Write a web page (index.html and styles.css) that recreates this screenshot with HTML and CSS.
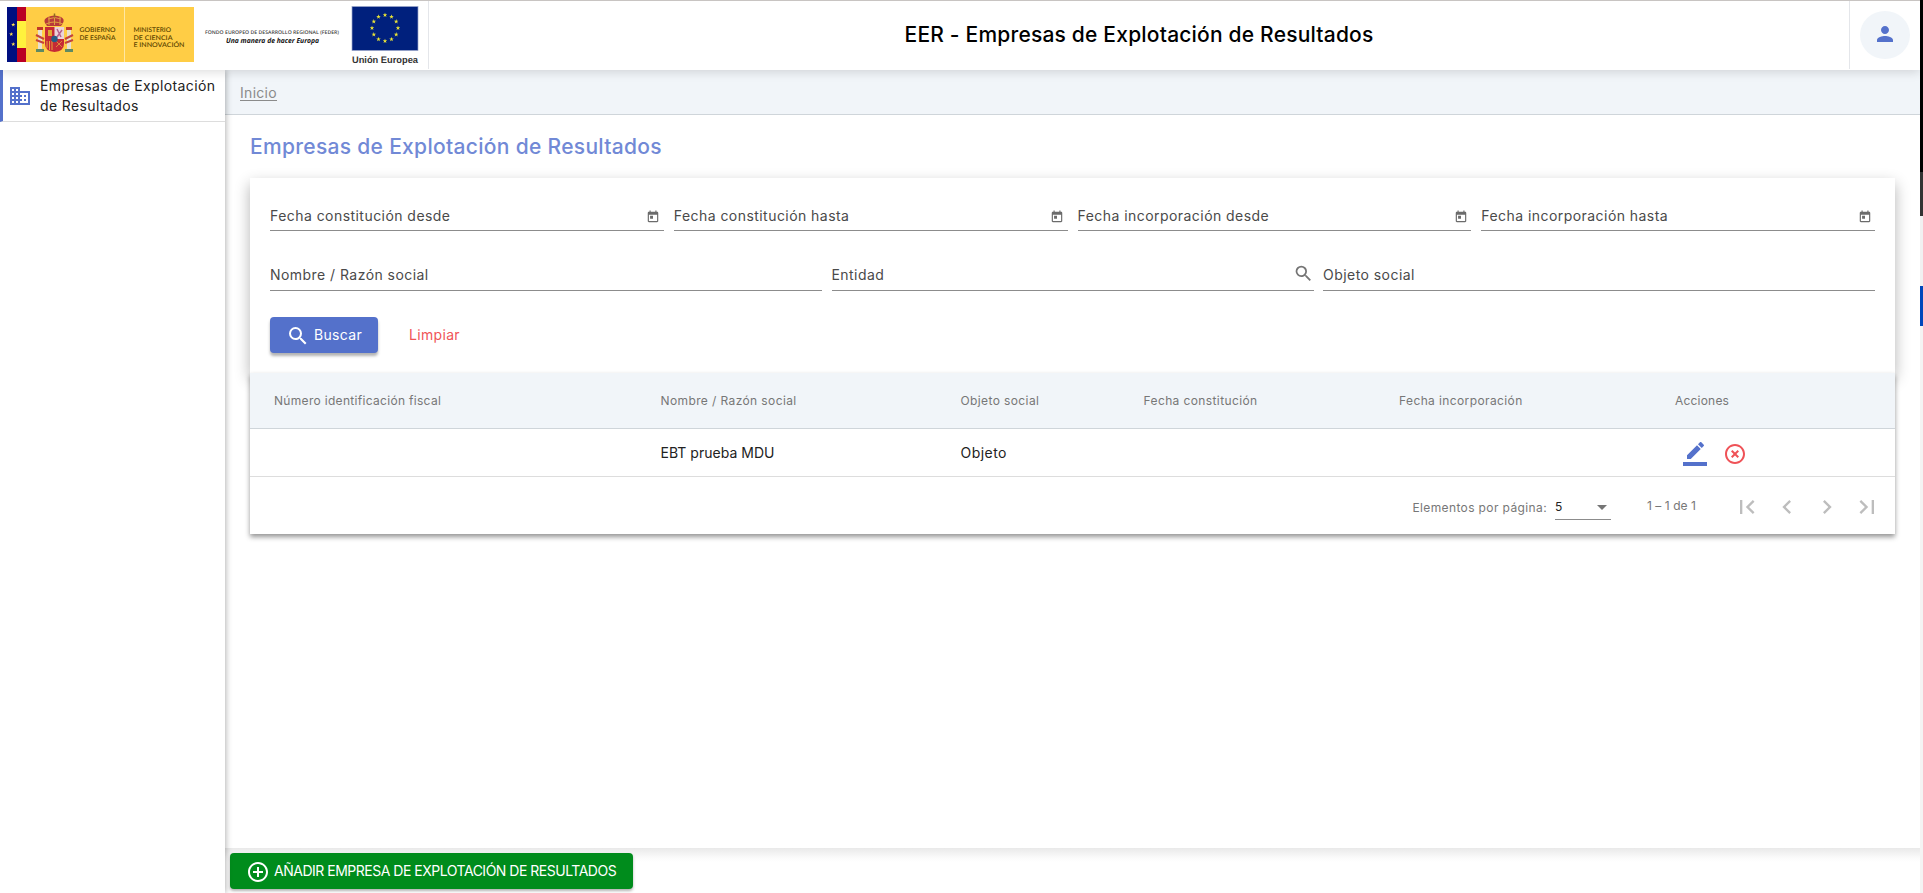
FILE: index.html
```
<!DOCTYPE html>
<html lang="es">
<head>
<meta charset="utf-8">
<title>EER - Empresas de Explotación de Resultados</title>
<link rel="stylesheet" href="styles.css">
</head>
<body>
<svg class="defs" width="0" height="0" aria-hidden="true">
  <symbol id="search" viewBox="0 0 24 24"><path d="M15.5 14h-.79l-.28-.27A6.47 6.47 0 0 0 16 9.5 6.5 6.5 0 1 0 9.5 16c1.61 0 3.09-.59 4.23-1.57l.27.28v.79l5 4.99L20.49 19l-4.99-5zm-6 0C7.01 14 5 11.99 5 9.5S7.01 5 9.5 5 14 7.01 14 9.5 11.99 14 9.5 14z"/></symbol>
  <symbol id="calendar" viewBox="0 0 24 24"><path d="M19 3h-1V1h-2v2H8V1H6v2H5c-1.11 0-1.99.9-1.99 2L3 19c0 1.1.89 2 2 2h14c1.1 0 2-.9 2-2V5c0-1.1-.9-2-2-2zm0 16H5V8h14v11zM7 10h5v5H7z"/></symbol>
  <symbol id="star" viewBox="-5 -5 10 10"><path d="M0-4.8 1.1-1.5H4.6L1.8.6 2.9 4 0 1.9-2.9 4-1.8.6-4.6-1.5H-1.1z"/></symbol>
</svg>
<div class="app">
  <header class="header">
    <div class="logos">
      <svg class="gob" width="187" height="55" viewBox="0 0 187 55">
        <rect width="187" height="55" fill="#ffcd45"/>
        <rect width="10" height="55" fill="#000f80"/>
        <rect x="10" width="9" height="55" fill="#ba0024"/>
        <rect x="10" y="14" width="9" height="27" fill="#fff23d"/>
        <g fill="#ffe44d"><use href="#star" x="4" y="15.500" width="4.500" height="4.500"/><use href="#star" x="2" y="25" width="4.500" height="4.500"/><use href="#star" x="4" y="35" width="4.500" height="4.500"/></g>
        <path d="M117.500 0v55" stroke="#ffe7a3" stroke-width="1"/>
        <g>
          <path d="M38 16q-2-4 3-6 6-3 13 0 4 2 2 6l-2 3H40z" fill="#b83a3a"/>
          <path d="M39 17q8-4 17 0M41 12q7-3 13 0M47.500 8v10M42 10v8M53 10v8" stroke="#e0a040" fill="none"/>
          <path d="M47.500 6.500v4" stroke="#8f6b20" stroke-width="1.500"/>
          <rect x="31" y="22" width="4" height="20" fill="#e8dfcf"/><rect x="60" y="22" width="4" height="20" fill="#e8dfcf"/>
          <path d="M30 20h6v3h-6zM59 20h6v3h-6z" fill="#c0392b"/>
          <path d="m29 28 8 4m-8 1 8 3M66 28l-8 4m8 1-8 3" stroke="#c4433c" stroke-width="2"/>
          <path d="M29 42h8v3h-8zM58 42h8v3h-8z" fill="#5e8a62"/>
          <path d="M38 20h19v17q0 7-9.500 8Q38 44 38 37z" fill="#c62a35"/>
          <path d="M47.500 20H57v12h-9.500z" fill="#ead4da"/>
          <path d="m50 22 4 8m1-7-5 7" stroke="#b5608a" stroke-width="1.500"/>
          <path d="M41 23h4v6h-4z" fill="#e0a832"/>
          <path d="M40 34v7m2.500-7v9M45 34v9" stroke="#e6a33a" stroke-width="1"/>
          <path d="m49 34 6 6m0-6-6 6" stroke="#d98a3a" stroke-width="1"/>
          <circle cx="47.500" cy="32" r="3.200" fill="#275c84"/>
        </g>
        <g class="gob-text"><text x="72.500" y="25.200" textLength="36" lengthAdjust="spacingAndGlyphs">GOBIERNO</text><text x="72.500" y="32.500" textLength="36" lengthAdjust="spacingAndGlyphs">DE ESPAÑA</text>
        <text x="126.500" y="25.200" textLength="37.500" lengthAdjust="spacingAndGlyphs">MINISTERIO</text><text x="126.500" y="32.500" textLength="39" lengthAdjust="spacingAndGlyphs">DE CIENCIA</text><text x="126.500" y="39.800" textLength="51" lengthAdjust="spacingAndGlyphs">E INNOVACIÓN</text></g>
      </svg>
      <svg class="feder" width="140" height="20" viewBox="0 0 140 20">
        <text class="fund" x="0" y="8" textLength="134" lengthAdjust="spacingAndGlyphs">FONDO EUROPEO DE DESARROLLO REGIONAL (FEDER)</text>
        <text class="motto" x="21" y="16.700" textLength="93" lengthAdjust="spacingAndGlyphs">Una manera de hacer Europa</text>
      </svg>
      <svg class="ue" width="72" height="63" viewBox="0 0 72 63">
        <rect x="1" y=".5" width="66" height="44" fill="#00207d" stroke="#9aa6cc" stroke-width=".7"/>
        <g fill="#e8e337">
          <use href="#star" x="31.500" y="6.500" width="5" height="5"/><use href="#star" x="38" y="8.200" width="5" height="5"/><use href="#star" x="42.700" y="13" width="5" height="5"/><use href="#star" x="44.500" y="19.500" width="5" height="5"/><use href="#star" x="42.700" y="26" width="5" height="5"/><use href="#star" x="38" y="30.700" width="5" height="5"/><use href="#star" x="31.500" y="32.500" width="5" height="5"/><use href="#star" x="25" y="30.700" width="5" height="5"/><use href="#star" x="20.300" y="26" width="5" height="5"/><use href="#star" x="18.500" y="19.500" width="5" height="5"/><use href="#star" x="20.300" y="13" width="5" height="5"/><use href="#star" x="25" y="8.200" width="5" height="5"/>
        </g>
        <text class="ue-text" x="1" y="57" textLength="66" lengthAdjust="spacingAndGlyphs">Unión Europea</text>
      </svg>
    </div>
    <h1 class="app-title">EER - Empresas de Explotación de Resultados</h1>
    <div class="user"><div class="avatar"><svg width="24" height="24" viewBox="0 0 24 24"><path d="M12 12c2.210 0 4-1.790 4-4s-1.790-4-4-4-4 1.790-4 4 1.790 4 4 4zm0 2c-2.670 0-8 1.340-8 4v2h16v-2c0-2.660-5.330-4-8-4z"/></svg></div></div>
  </header>
  <div class="body">
    <nav class="sidebar">
      <a class="nav-item">
        <svg width="24" height="24" viewBox="0 0 24 24"><path d="M12 7V3H2v18h20V7H12zM6 19H4v-2h2v2zm0-4H4v-2h2v2zm0-4H4V9h2v2zm0-4H4V5h2v2zm4 12H8v-2h2v2zm0-4H8v-2h2v2zm0-4H8V9h2v2zm0-4H8V5h2v2zm10 12h-8v-2h2v-2h-2v-2h2v-2h-2V9h8v10zm-2-8h-2v2h2v-2zm0 4h-2v2h2v-2z"/></svg>
        <span>Empresas de Explotación<br>de Resultados</span>
      </a>
    </nav>
    <main class="main">
      <div class="breadcrumb"><a>Inicio</a></div>
      <section class="content">
        <h2 class="page-title">Empresas de Explotación de Resultados</h2>
        <form class="filters">
          <div class="row dates">
            <div class="field"><label>Fecha constitución desde</label><svg class="cal"><use href="#calendar"/></svg></div>
            <div class="field"><label>Fecha constitución hasta</label><svg class="cal"><use href="#calendar"/></svg></div>
            <div class="field"><label>Fecha incorporación desde</label><svg class="cal"><use href="#calendar"/></svg></div>
            <div class="field"><label>Fecha incorporación hasta</label><svg class="cal"><use href="#calendar"/></svg></div>
          </div>
          <div class="row names">
            <div class="field"><label>Nombre / Razón social</label></div>
            <div class="field"><label>Entidad</label><svg class="lens"><use href="#search"/></svg></div>
            <div class="field"><label>Objeto social</label></div>
          </div>
          <div class="actions">
            <button type="button" class="btn primary"><svg width="24" height="24"><use href="#search"/></svg>Buscar</button>
            <button type="button" class="btn clear">Limpiar</button>
          </div>
        </form>
        <div class="results">
          <div class="tr head"><span class="nif">Número identificación fiscal</span><span>Nombre / Razón social</span><span>Objeto social</span><span>Fecha constitución</span><span>Fecha incorporación</span><span class="last">Acciones</span></div>
          <div class="tr data"><span></span><span class="ebt">EBT prueba MDU</span><span>Objeto</span><span></span><span></span>
            <span class="icons">
              <svg width="24" height="24" viewBox="0 0 24 24" fill="#5471cb"><path d="M17.750 7 14 3.250l-10 10V17h3.750l10-10zm2.960-2.960a1 1 0 0 0 0-1.410L18.370.29a1 1 0 0 0-1.410 0L15 2.250 18.750 6l1.960-1.960zM0 20h24v4H0z"/></svg>
              <svg width="24" height="24" viewBox="0 0 24 24" fill="#ef5257"><path d="M14.590 8 12 10.590 9.410 8 8 9.410 10.590 12 8 14.590 9.410 16 12 13.410 14.590 16 16 14.590 13.410 12 16 9.410 14.590 8zM12 2C6.470 2 2 6.470 2 12s4.470 10 10 10 10-4.470 10-10S17.530 2 12 2zm0 18c-4.410 0-8-3.590-8-8s3.590-8 8-8 8 3.590 8 8-3.590 8-8 8z"/></svg>
            </span></div>
          <div class="paginator">
            <span class="per-page">Elementos por página:</span>
            <div class="select"><span>5</span><i class="arrow"></i></div>
            <span class="range">1 – 1 de 1</span>
            <div class="pages">
              <svg viewBox="0 0 24 24"><path d="M18.410 16.590 13.820 12l4.590-4.590L17 6l-6 6 6 6zM6 6h2v12H6z"/></svg>
              <svg viewBox="0 0 24 24"><path d="M15.410 7.410 14 6l-6 6 6 6 1.410-1.410L10.830 12z"/></svg>
              <svg viewBox="0 0 24 24"><path d="M10 6 8.590 7.410 13.170 12l-4.580 4.590L10 18l6-6z"/></svg>
              <svg viewBox="0 0 24 24"><path d="M5.590 7.410 10.180 12l-4.590 4.590L7 18l6-6-6-6zM16 6h2v12h-2z"/></svg>
            </div>
          </div>
        </div>
      </section>
      <footer class="footer"><button type="button" class="btn add"><svg width="24" height="24" viewBox="0 0 24 24"><path d="M13 7h-2v4H7v2h4v4h2v-4h4v-2h-4V7zm-1-5C6.480 2 2 6.480 2 12s4.480 10 10 10 10-4.480 10-10S17.520 2 12 2zm0 18c-4.410 0-8-3.590-8-8s3.590-8 8-8 8 3.590 8 8-3.590 8-8 8z"/></svg>AÑADIR EMPRESA DE EXPLOTACIÓN DE RESULTADOS</button></footer>
    </main>
  </div>
</div>
<div class="edge"><i class="black"></i><i class="dark"></i><i class="light"></i><i class="blue"></i><i class="rest"></i></div>
</body>
</html>
```
FILE: styles.css
```
* { box-sizing: border-box; }
body { margin: 0; display: flex; width: 1923px; height: 893px; overflow: hidden; background: #fff; font: 400 14px/20px Inter, sans-serif; letter-spacing: .45px; color: #222; }
.defs { position: absolute; }
.app { width: 1920px; display: flex; flex-direction: column; }
svg { flex: none; }

/* Header */
.header { height: 70px; flex: none; display: flex; align-items: stretch; background: #fff; border-top: 1px solid #c8c4c2; box-shadow: 0 2px 10px rgba(0,0,0,.14); position: relative; z-index: 3; }
.logos { width: 429px; height: 68px; display: flex; border-right: 1px solid #e4e6ea; padding-left: 7px; }
.logos svg { overflow: visible; }
.logos text { text-rendering: geometricPrecision; letter-spacing: 0; }
.gob { margin-top: 6px; }
.feder { margin: 25px 0 0 11px; }
.ue { margin: 5px 0 0 6px; }
.gob-text { font: 600 6.500px Lato, sans-serif; fill: #5c4500; }
.fund { font: 600 5px "Open Sans", sans-serif; fill: #444; }
.motto { font: italic 700 7px "Open Sans", sans-serif; fill: #111; }
.ue-text { font: 700 9.500px "Liberation Sans", sans-serif; fill: #333; }
.app-title { flex: 1; margin: 0; text-align: center; font-size: 21px; font-weight: 450; line-height: 68px; letter-spacing: .2px; color: #000; }
.user { width: 71px; height: 68px; border-left: 1px solid #e4e6ea; padding: 10px 0 0 10px; }
.avatar { width: 50px; height: 48px; border-radius: 50%; background: #f1f5f9; display: flex; align-items: center; justify-content: center; }
.avatar svg { fill: #5471cb; margin-top: -2px; }

/* Side navigation */
.body { flex: 1; display: flex; min-height: 0; }
.sidebar { width: 225px; background: #fff; box-shadow: 1px 0 6px rgba(0,0,0,.3); position: relative; z-index: 2; }
.nav-item { display: flex; height: 52px; align-items: center; border-left: 3px solid #5471cb; border-bottom: 1px solid #ddd; padding-left: 5px; gap: 8px; }
.nav-item svg { fill: #5471cb; }
.nav-item span { white-space: nowrap; padding-top: 1px; letter-spacing: .38px; }

/* Main column */
.main { flex: 1; display: flex; flex-direction: column; min-width: 0; }
.breadcrumb { height: 45px; flex: none; padding: 13px 15px; background: #f1f5f9; border-bottom: 1px solid #cfd5da; }
.breadcrumb a { color: #8b8b8b; text-decoration: underline; text-underline-offset: 2px; letter-spacing: .3px; }
.content { flex: 1; padding: 17px 25px 0; }
.page-title { margin: 0 0 16px; font-size: 21px; font-weight: 450; line-height: 30px; letter-spacing: .31px; color: #7189d6; }
.filters { height: 195px; padding: 27px 20px 0; background: #fff; box-shadow: 0 6px 14px rgba(0,0,0,.3); }
.row { display: grid; }
.dates { grid-template-columns: repeat(4, 1fr); column-gap: 10px; margin-bottom: 30px; }
.names { grid-template-columns: 552px 1fr 552px; column-gap: 9.500px; }
.field { height: 26px; padding-top: 1px; display: flex; justify-content: space-between; border-bottom: 1px solid #8c8c8c; color: #4a4a4a; }
.names .field { height: 30px; padding-top: 4px; }
.cal { width: 14px; height: 14px; margin: 4px 3.500px 0 0; fill: #6b6b6b; }
.lens { width: 21px; height: 21px; margin: -2px 0 0; fill: #757575; }
.actions { display: flex; margin-top: 26px; gap: 16px; }
.btn { height: 36px; border: 0; border-radius: 4px; font: inherit; letter-spacing: .33px; display: flex; align-items: center; padding: 0 15px; }
.btn svg { fill: #fff; margin-right: 4px; }
.primary { width: 108px; padding-left: 16px; background: #5471cb; color: #fff; box-shadow: 0 3px 3px rgba(0,0,0,.3); }
.primary svg { margin-top: 2px; }
.clear { background: none; color: #f05458; }

/* Results */
.results { background: #fff; height: 161px; box-shadow: 0 3px 5px rgba(0,0,0,.42); position: relative; }
.tr { display: grid; grid-template-columns: 386.500px 300px 183px 255.500px 276px 1fr; align-items: center; padding-left: 24px; }
.head { height: 56px; background: #f1f5f9; border-bottom: 1px solid #cfd5da; font-size: 12px; letter-spacing: .39px; color: #777; }
.head .nif { letter-spacing: .31px; }
.head .last { letter-spacing: .2px; }
.data { height: 48px; border-bottom: 1px solid #ddd; color: #222; }
.data .ebt { letter-spacing: .02px; }
.icons { display: flex; gap: 16px; padding: 2px 0 0 8px; }
.paginator { height: 57px; display: flex; align-items: center; justify-content: flex-end; padding-right: 8px; font-size: 12px; color: #777; }
.per-page { padding-top: 5px; white-space: nowrap; letter-spacing: .38px; }
.select { width: 56px; height: 24px; margin: 4px 0 0 8px; display: flex; justify-content: space-between; align-items: center; border-bottom: 1px solid #8c8c8c; color: #222; }
.arrow { border: 5px solid transparent; border-top-color: #757575; border-bottom: 0; margin-right: 4px; }
.range { width: 49px; margin: 1px 31px 0 36px; white-space: nowrap; letter-spacing: .05px; }
.pages { display: flex; margin-top: 3px; }
.pages svg { width: 40px; height: 28px; fill: #bdbdbd; }

/* Footer */
.footer { height: 45px; flex: none; padding: 5px; background: linear-gradient(#e9e9e9, #fbfbfb 10px, #fff 14px); }
.add { width: 403px; padding-left: 16px; background: #008c1c; color: #fff; box-shadow: 0 2px 3px rgba(0,0,0,.3); letter-spacing: -.49px; white-space: nowrap; }
.add svg { margin: 2px 4px 0 0; }

/* Strip beside the window */
.edge { width: 3px; display: flex; flex-direction: column; }
.black { height: 172px; background: #000; }
.dark { height: 44px; background: #333; }
.light { height: 70px; background: #f1f1f1; }
.blue { height: 40px; background: #0047bb; }
.rest { flex: 1; background: #f4f4f4; }
```
